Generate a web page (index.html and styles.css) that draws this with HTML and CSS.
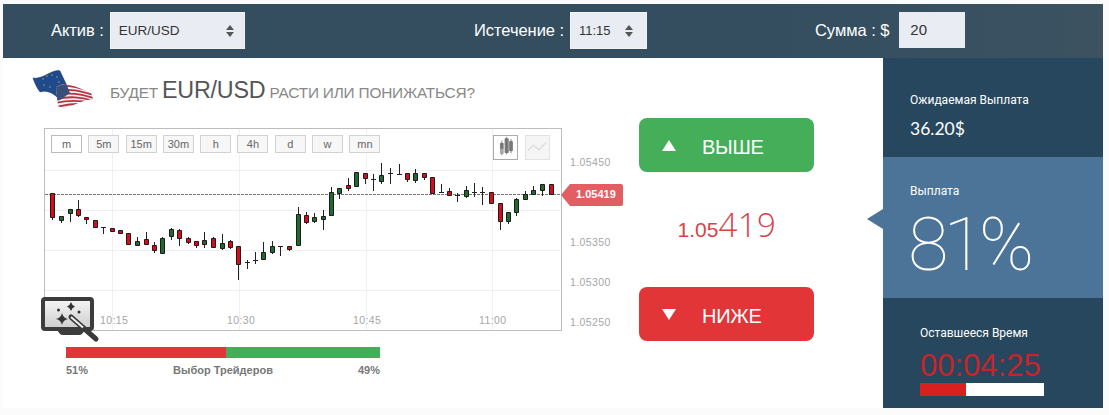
FILE: index.html
```html
<!DOCTYPE html>
<html lang="ru">
<head>
<meta charset="utf-8">
<title>EUR/USD</title>
<link rel="stylesheet" href="styles.css">
</head>
<body>
<div class="app">
  <header class="topbar">
    <div class="field"><span class="field-label">Актив :</span>
      <div class="select select-asset"><span>EUR/USD</span><i class="updown"></i></div></div>
    <div class="field"><span class="field-label">Истечение :</span>
      <div class="select select-time"><span>11:15</span><i class="updown"></i></div></div>
    <div class="field"><span class="field-label">Сумма : $</span>
      <div class="amount">20</div></div>
  </header>
  <main class="main">
    <section class="left">
      <div class="question">
        <svg class="flag" viewBox="30 69 65 42" width="65" height="42">
          <defs>
            <clipPath id="us"><path d="M56 87C60 85 63 84 66 84C72 85 80 88 91 93L93 99C85 100 75 104 64 109L58 106Z"/></clipPath>
          </defs>
          <path class="flag-eu" d="M33 78C40 79 45 75 50 73C54 71 58 70 60 71L67 86L58 98C52 92 46 90 40 92C37 88 35 84 33 78Z"/>
          <g class="flag-stars"><circle cx="43" cy="79" r=".7"/><circle cx="47" cy="76" r=".7"/><circle cx="52" cy="75" r=".7"/><circle cx="57" cy="77" r=".7"/><circle cx="44" cy="85" r=".7"/><circle cx="50" cy="87" r=".7"/><circle cx="59" cy="82" r=".7"/></g>
          <g clip-path="url(#us)">
            <rect class="flag-white" x="50" y="80" width="45" height="32"/>
            <path class="flag-stripes" d="M56 87C70 84 80 88 94 92M56 91C70 88 80 91 94 95M56 95C70 92 80 94 94 98M56 99C70 96 80 97 94 101M56 103C68 100 78 100 94 103M56 107C68 104 76 103 90 104"/>
            <path class="flag-canton" d="M54 88L66 83L70 93L60 100L56 101Z"/>
          </g>
        </svg>
        <p class="question-text">БУДЕТ <strong>EUR/USD</strong> РАСТИ ИЛИ ПОНИЖАТЬСЯ?</p>
      </div>
      <div class="chart">
        <svg class="chart-svg" viewBox="44 128 581 205" width="581" height="205">
          <rect class="frame" x="44.5" y="128.5" width="517" height="202"/>
          <path class="grid" d="M45 170.5H561M45 210.5H561M45 250.5H561M45 290.5H561M112.5 129V330M239.5 129V330M366.5 129V330M492.5 129V330"/>
          <path class="dash" d="M45 194.5H561"/>
          <path class="wick" d="M52.5 193V220M61.5 216V223M70.5 209V222M78.5 200V217M86.5 217V224M95.5 220V228M103.5 227V234M101 227.5H106M112.5 228V232M120.5 230V234M128.5 233V244M137.5 237V246M146.5 232V245M154.5 242V253M162.5 237V254M171.5 228V240M179.5 229V246M188.5 237V244M196.5 241V248M204.5 232V248M213.5 237V248M222.5 234V250M230.5 240V249M238.5 246V280M247.5 260V269M245 262.5H250M255.5 252V264M253 260.5H258M263.5 242V260M272.5 241V254M280.5 246V256M278 246.5H283M289.5 246V251M298.5 207V245M306.5 212V224M314.5 213V223M323.5 210V230M331.5 187V216M339.5 188V199M348.5 178V191M356.5 172V187M365.5 173V184M373.5 174V191M371 179.5H376M381.5 163V184M390.5 168V184M388 173.5H393M399.5 164V175M397 174.5H402M407.5 173V182M415.5 169V183M424.5 173V180M432.5 177V194M441.5 184V193M439 192.5H444M449.5 188V196M457.5 193V202M455 195.5H460M466.5 186V198M474.5 183V197M472 192.5H477M482.5 187V205M480 192.5H485M491.5 192V204M500.5 203V230M508.5 212V224M516.5 198V216M525.5 191V200M533.5 186V195M542.5 184V196M551.5 184V195"/>
          <path class="candle-down" d="M50.5 193.5h4V217.5h-4zM76.5 209.5h4V215.5h-4zM84.5 217.5h4V219.5h-4zM93.5 220.5h4V227.5h-4zM110.5 228.5h4V231.5h-4zM118.5 230.5h4V233.5h-4zM126.5 233.5h4V244.5h-4zM144.5 239.5h4V244.5h-4zM152.5 245.5h4V250.5h-4zM177.5 230.5h4V238.5h-4zM186.5 238.5h4V242.5h-4zM194.5 241.5h4V245.5h-4zM211.5 238.5h4V247.5h-4zM228.5 241.5h4V247.5h-4zM236.5 246.5h4V264.5h-4zM287.5 246.5h4V249.5h-4zM304.5 215.5h4V222.5h-4zM346.5 185.5h4V188.5h-4zM363.5 173.5h4V178.5h-4zM405.5 173.5h4V179.5h-4zM422.5 173.5h4V177.5h-4zM430.5 177.5h4V193.5h-4zM447.5 191.5h4V195.5h-4zM489.5 192.5h4V203.5h-4zM498.5 203.5h4V221.5h-4zM549.5 184.5h4V194.5h-4z"/>
          <path class="candle-up" d="M59.5 216.5h4V220.5h-4zM68.5 209.5h4V213.5h-4zM135.5 241.5h4V245.5h-4zM160.5 238.5h4V253.5h-4zM169.5 229.5h4V236.5h-4zM202.5 240.5h4V244.5h-4zM220.5 243.5h4V248.5h-4zM261.5 252.5h4V259.5h-4zM270.5 246.5h4V252.5h-4zM296.5 214.5h4V245.5h-4zM312.5 217.5h4V221.5h-4zM321.5 216.5h4V219.5h-4zM329.5 192.5h4V215.5h-4zM337.5 188.5h4V193.5h-4zM354.5 172.5h4V186.5h-4zM379.5 175.5h4V181.5h-4zM413.5 173.5h4V180.5h-4zM464.5 190.5h4V196.5h-4zM506.5 212.5h4V221.5h-4zM514.5 199.5h4V212.5h-4zM523.5 194.5h4V199.5h-4zM531.5 190.5h4V194.5h-4zM540.5 184.5h4V190.5h-4z"/>
          <g class="axis">
            <text x="100" y="324">10:15</text><text x="227" y="324">10:30</text><text x="353" y="324">10:45</text><text x="479" y="324">11:00</text>
            <text x="570" y="166">1.05450</text><text x="570" y="246">1.05350</text><text x="570" y="286">1.05300</text><text x="570" y="326">1.05250</text>
          </g>
          <path class="tag" d="M561 195L570 184H621Q623 184 623 186V204Q623 206 621 206H570Z"/>
          <text class="tag-text" x="576" y="198">1.05419</text>
        </svg>
        <div class="ranges">
          <button class="range is-active">m</button><button class="range">5m</button><button class="range">15m</button><button class="range">30m</button><button class="range">h</button><button class="range">4h</button><button class="range">d</button><button class="range">w</button><button class="range">mn</button>
        </div>
        <div class="types">
          <button class="type is-active"><svg viewBox="0 0 25 25" width="23" height="23"><path class="t-a" d="M7 8h3v6H7zM12 3h3.500v15H12zM17 6h3v10h-3z"/><path class="t-a" d="M8.500 5V21M13.700 1V20M18.500 3V19"/><path class="t-b" d="M7 14h3v5H7z"/></svg></button>
          <button class="type"><svg viewBox="0 0 25 25" width="23" height="23"><path class="t-line" d="M2 16L8 10L14 15L22 7"/></svg></button>
        </div>
        <svg class="wand" viewBox="40 295 60 48" width="60" height="48">
          <defs><linearGradient id="screen" x1="0" y1="0" x2="0" y2="1"><stop offset="0" stop-color="#f6f6f6"/><stop offset="1" stop-color="#cdcdcd"/></linearGradient></defs>
          <path class="wand-base" d="M57 330H85L82 334Q81 335 79 335H63Q61 335 60 334Z"/>
          <rect class="wand-screen" x="43" y="299" width="49" height="30" rx="2"/>
          <path class="wand-spark" d="M62 313Q63 318 68 319Q63 320 62 325Q61 320 56 319Q61 318 62 313ZM71 302Q72 305.500 75 306.500Q72 307.500 71 311Q70 307.500 67 306.500Q70 305.500 71 302Z"/>
          <circle class="wand-spark" cx="58.500" cy="310" r="1.500"/><circle class="wand-spark" cx="79" cy="312" r="1.500"/>
          <path class="wand-stick" d="M71 317L96 339"/><path class="wand-tip" d="M71 317L83 327.500"/>
        </svg>
      </div>
      <div class="sentiment">
        <div class="bar"><span class="bar-down"></span><span class="bar-up"></span></div>
        <div class="bar-labels"><span>51%</span><span>Выбор Трейдеров</span><span>49%</span></div>
      </div>
    </section>
    <section class="trade">
      <button class="trade-btn up"><i class="tri tri-up"></i><span>ВЫШЕ</span></button>
      <div class="price"><small>1.05</small>419</div>
      <button class="trade-btn down"><i class="tri tri-down"></i><span>НИЖЕ</span></button>
    </section>
    <aside class="panel">
      <div class="panel-sec sec-expected"><div class="panel-label">Ожидаемая Выплата</div><div class="expected">36.20$</div></div>
      <div class="panel-sec sec-payout"><i class="pointer"></i><div class="panel-label">Выплата</div><div class="payout">81%</div></div>
      <div class="panel-sec sec-time"><div class="panel-label">Оставшееся Время</div><div class="timer">00:04:25</div><div class="time-bar"><span class="time-fill"></span></div></div>
    </aside>
  </main>
</div>
</body>
</html>
```
FILE: styles.css
```css
* { box-sizing: border-box; }
html, body { margin: 0; height: 100%; }
body { background: #fbfbfb; font-family: "Liberation Sans", Arial, sans-serif; overflow: hidden; }
.app { width: 1100px; margin: 4px 0 0 3px; }

.topbar { height: 54px; padding: 8px 0 0 48px; display: grid; grid-template-columns: 423px 341px 1fr; background: linear-gradient(90deg, #344e60 0%, #344e60 70%, #3c5261 100%); }
.field { display: flex; align-items: flex-start; }
.field-label { color: #fff; font-size: 16.500px; line-height: 37px; letter-spacing: -0.05px; margin-right: 6px; white-space: nowrap; }
.select { height: 37px; background: #e9edf3; color: #333; font-size: 13px; display: flex; align-items: center; justify-content: space-between; padding: 0 10px 0 8px; border: 1px solid #f0f2f5; }
.select-asset { width: 135px; font-size: 13.500px; }
.select-time { width: 77px; padding-right: 13px; }
.amount { width: 66px; height: 36px; margin-left: 4px; background: #e9edf3; color: #333; font-size: 15px; line-height: 36px; padding-left: 11px; }
.updown { width: 8px; height: 12px; position: relative; display: block; }
.updown::before, .updown::after { content: ""; position: absolute; left: 0; border-left: 4px solid transparent; border-right: 4px solid transparent; }
.updown::before { top: 0; border-bottom: 5px solid #555; }
.updown::after { bottom: 0; border-top: 5px solid #555; }

.main { display: flex; height: 350px; background: #fff; }
.left { width: 636px; padding-left: 29px; position: relative; }
.question { height: 70px; display: flex; align-items: flex-start; }
.flag { margin: 11px 0 0 -2px; display: block; flex: none; }
.question-text { margin: 16px 0 0 15px; color: #888; font-size: 15.400px; line-height: 32px; letter-spacing: -0.2px; white-space: nowrap; }
.question-text strong { color: #555; font-size: 23.300px; font-weight: 400; letter-spacing: -0.2px; }
.flag-eu { fill: #1f4a8c; stroke: #17325c; stroke-width: .5; }
.flag-stars circle { fill: #c5b74a; }
.flag-white { fill: #f2f2f2; }
.flag-stripes { fill: none; stroke: #b8323f; stroke-width: 1.800; }
.flag-canton { fill: #3a4f78; }

.chart { position: relative; width: 581px; height: 205px; margin-left: 12px; }
.chart-svg { display: block; }
.frame { fill: #fff; stroke: #bdbdbd; }
.grid { fill: none; stroke: #f0f0f0; }
.dash { fill: none; stroke: #777; stroke-dasharray: 3 1; }
.wick { fill: none; stroke: #222; }
.candle-down { fill: #d40d1c; stroke: #1b1b1b; }
.candle-up { fill: #22692f; stroke: #1b1b1b; }
.axis text { fill: #a6a6a6; font-size: 10.500px; letter-spacing: .4px; font-family: "Liberation Sans", Arial, sans-serif; }
.tag { fill: #e35e62; }
.tag-text { fill: #fff; font-size: 11px; font-weight: 700; font-family: "Liberation Sans", Arial, sans-serif; }

.ranges { position: absolute; left: 7px; top: 7px; display: flex; gap: 6.300px; }
.range { width: 31px; height: 18px; padding: 0; background: #f7f7f7; border: 1px solid #d2d2d2; color: #666; font: 11px "Liberation Sans", Arial, sans-serif; }
.range.is-active { background: #fff; border-color: #bbb; }
.types { position: absolute; left: 449px; top: 7px; display: flex; gap: 7px; }
.type { width: 25px; height: 25px; padding: 0; background: #f5f5f5; border: 1px solid #e2e2e2; display: block; }
.type svg { display: block; }
.type.is-active { background: #fff; border-color: #aaa; }
.t-a { fill: #888; stroke: #666; stroke-width: .800; }
.t-b { fill: #aaa; stroke: #999; stroke-width: .800; }
.t-line { fill: none; stroke: #dedede; stroke-width: 1.500; }

.wand { position: absolute; left: -4px; top: 167px; display: block; }
.wand-screen { fill: url(#screen); stroke: #3c3c3c; stroke-width: 4; }
.wand-base { fill: #3c3c3c; }
.wand-spark { fill: #333; }
.wand-stick { stroke: #3a3a3a; stroke-width: 5; stroke-linecap: round; }
.wand-tip { stroke: #eee; stroke-width: 2; }

.sentiment { width: 314px; margin: 14px 0 0 34px; }
.bar { height: 11px; display: flex; }
.bar-down { width: 160px; background: #e13537; }
.bar-up { flex: 1; background: #43ad57; }
.bar-labels { display: flex; justify-content: space-between; margin-top: 6px; color: #777; font-size: 11px; line-height: 12px; font-weight: 700; }

.trade { width: 175px; padding-top: 60px; display: flex; flex-direction: column; }
.trade-btn { height: 54px; border: 0; border-radius: 8px; color: #fff; display: flex; align-items: center; padding: 4px 0 0 23px; font: 20px "Liberation Sans", Arial, sans-serif; letter-spacing: -0.3px; }
.trade-btn span { margin-left: 26px; }
.trade-btn.up { background: #44ae58; }
.trade-btn.down { background: #e13537; }
.tri { width: 0; height: 0; margin-top: -4px; border-left: 7px solid transparent; border-right: 7px solid transparent; }
.tri-up { border-bottom: 11px solid #fff; }
.tri-down { border-top: 11px solid #fff; }
.price { height: 115px; text-align: center; color: #d9424a; font-size: 33px; font-weight: 300; line-height: 106px; padding-left: 1px; letter-spacing: .5px; font-family: "Open Sans", sans-serif; }
.price small { font-size: 21px; letter-spacing: 0; font-family: "Liberation Sans", sans-serif; }

.panel { margin-left: 69px; width: 220px; color: #fff; display: flex; flex-direction: column; }
.panel-sec { position: relative; }
.panel-label { font: 12px/16px Roboto, sans-serif; }
.sec-expected { height: 99px; background: #26475e; padding: 34px 0 0 27px; }
.expected { font: 400 17.500px/20px Lato, sans-serif; margin-top: 11px; }
.sec-payout { height: 141px; background: #4c7398; padding: 26px 0 0 27px; }
.pointer { position: absolute; left: -16px; top: 52px; width: 16px; height: 20px; background: #4c7398; clip-path: polygon(0 50%, 100% 0, 100% 100%); }
.payout { font: 100 74px/76px Roboto, sans-serif; margin: 8px 0 0 -2px; letter-spacing: -5px; }
.sec-time { height: 110px; background: #26475e; padding: 27px 0 0 37px; }
.timer { color: #c6242b; font-size: 31px; line-height: 32px; margin-top: 9px; }
.time-bar { width: 124px; height: 13px; background: #fff; margin-top: 1px; }
.time-fill { display: block; width: 46px; height: 13px; background: #d8211f; }
```
